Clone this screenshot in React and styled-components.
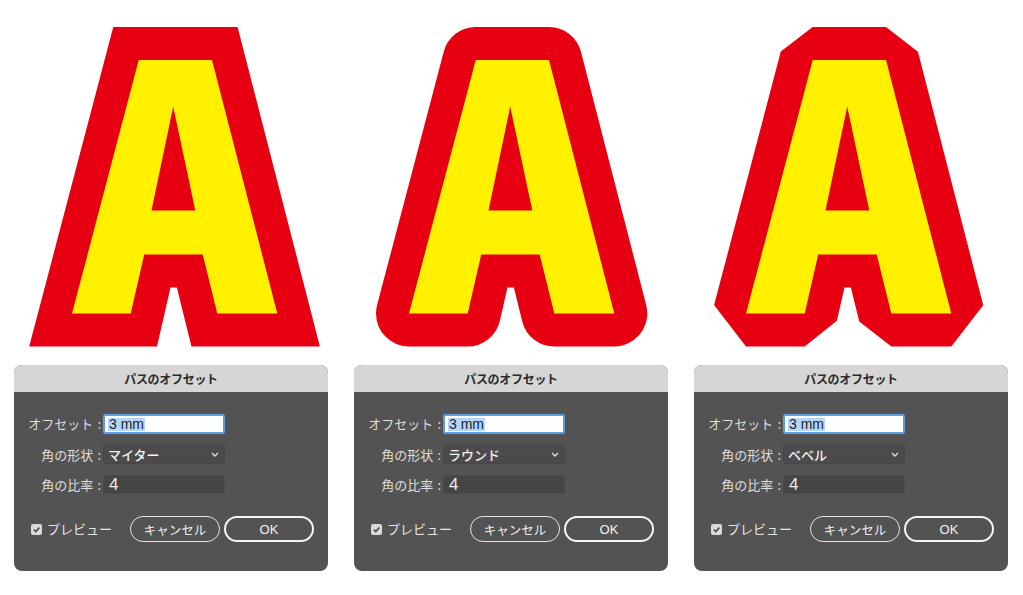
import React from 'react';
import styled, { createGlobalStyle } from 'styled-components';

const GlobalStyle = createGlobalStyle`
    body {
        margin: 0;
        background: #ffffff;
        font-family: "Noto Sans CJK JP", "Noto Sans", sans-serif;
    }
`;

const RED = '#e60012';
const YELLOW = '#fff100';

// the glyph "A" outline and its counter, drawn once and offset by a stroke
const A_PATH = 'M138.7 60 L212 60 L277.3 313.5 L217.3 313.5 L202.7 254.5 L144.2 254.5 L130.7 313.5 L72 313.5 Z';
const COUNTER_PATH = 'M173.2 106.5 L195.3 210.5 L151.5 210.5 Z';

const variants = [
    { join: 'miter', shape: 'マイター' },
    { join: 'round', shape: 'ラウンド' },
    { join: 'bevel', shape: 'ベベル' },
];

const Page = styled.div`
    width: 1023px;
    height: 595px;
    display: flex;
    flex-direction: column;
`;

const LetterRow = styled.div`
    display: flex;
    height: 350px;
`;

const LetterSvg = styled.svg`
    width: 337px;
    height: 350px;
    flex: none;
`;

const DialogRow = styled.div`
    display: flex;
    gap: 26px;
    padding-left: 14px;
    margin-top: 15px;
`;

const Dialog = styled.div`
    width: 314px;
    height: 206px;
    border-radius: 8px;
    overflow: hidden;
    background: #535353;
    display: flex;
    flex-direction: column;
`;

const TitleBar = styled.div`
    height: 27px;
    background: #d6d6d6;
    color: #2b2b2b;
    font-size: 12px;
    font-weight: 700;
    letter-spacing: -0.3px;
    line-height: 27px;
    text-align: center;
`;

const Fields = styled.div`
    display: grid;
    grid-template-columns: 87px 122px;
    grid-template-rows: 20px 19px 19px;
    column-gap: 2px;
    row-gap: 11px;
    padding-top: 22px;
`;

const Label = styled.div`
    color: #dedede;
    font-size: 13px;
    line-height: 20px;
    text-align: right;
    white-space: nowrap;
`;

const Colon = styled.span`
    margin-left: 4px;
`;

const TextInput = styled.div`
    box-sizing: border-box;
    background: #ffffff;
    border: 2px solid #5c9ee4;
    border-radius: 2px;
    padding-left: 3px;
    display: flex;
    align-items: center;
`;

const Selected = styled.span`
    background: #b5d6fb;
    color: #1d1d1d;
    font-family: "Liberation Sans", Arial, sans-serif;
    font-size: 14px;
    line-height: 13px;
    padding: 0 1px;
`;

const Select = styled.div`
    box-sizing: border-box;
    background: #4b4b4b;
    border: 1px solid #474747;
    border-radius: 2px;
    padding: 0 5px 0 4px;
    display: flex;
    align-items: center;
    justify-content: space-between;
    color: #f2f2f2;
    font-size: 13px;
    font-weight: 500;
    line-height: 17px;
`;

const RatioInput = styled.div`
    box-sizing: border-box;
    background: #454545;
    border: 1px solid #4a4a4a;
    border-radius: 2px;
    padding-left: 5px;
    color: #ececec;
    font-family: "Liberation Sans", Arial, sans-serif;
    font-size: 17px;
    line-height: 18px;
`;

const Footer = styled.div`
    display: flex;
    align-items: center;
    justify-content: space-between;
    margin-top: 22px;
    padding: 0 14px 0 17px;
    height: 26px;
`;

const Preview = styled.div`
    display: flex;
    align-items: center;
    gap: 5px;
    color: #e4e4e4;
    font-size: 13px;
    line-height: 16px;
`;

const CheckBox = styled.span`
    width: 11px;
    height: 11px;
    border-radius: 2px;
    background: #d9d9d9;
    display: flex;
    align-items: center;
    justify-content: center;
`;

const Buttons = styled.div`
    display: flex;
    gap: 4px;
`;

const Button = styled.div`
    box-sizing: border-box;
    width: 90px;
    height: 26px;
    border-radius: 13px;
    border: ${(p) => (p.$primary ? '2px solid #f4f4f4' : '1.5px solid #e2e2e2')};
    color: #f2f2f2;
    font-family: ${(p) => (p.$primary ? '"Liberation Sans", Arial, sans-serif' : '"Noto Sans CJK JP", sans-serif')};
    font-size: ${(p) => (p.$primary ? '13px' : '12.5px')};
    display: flex;
    align-items: center;
    justify-content: center;
`;

const Letter = ({ join }) => (
    <LetterSvg viewBox="0 0 337 350">
        <path
            d={A_PATH}
            fill={RED}
            stroke={RED}
            strokeWidth={66}
            strokeLinejoin={join}
            strokeMiterlimit={4}
        />
        <path d={`${A_PATH} ${COUNTER_PATH}`} fill={YELLOW} fillRule="evenodd" />
    </LetterSvg>
);

const OffsetDialog = ({ shape }) => (
    <Dialog>
        <TitleBar>パスのオフセット</TitleBar>
        <Fields>
            <Label>オフセット<Colon>:</Colon></Label>
            <TextInput>
                <Selected>3 mm</Selected>
            </TextInput>
            <Label>角の形状<Colon>:</Colon></Label>
            <Select>
                {shape}
                <svg width="8" height="5" viewBox="0 0 8 5">
                    <polyline points="1,1 4,4 7,1" fill="none" stroke="#e2e2e2" strokeWidth="1.4" />
                </svg>
            </Select>
            <Label>角の比率<Colon>:</Colon></Label>
            <RatioInput>4</RatioInput>
        </Fields>
        <Footer>
            <Preview>
                <CheckBox>
                    <svg width="9" height="9" viewBox="0 0 9 9">
                        <polyline points="1.8,4.6 3.8,6.6 7.4,2.4" fill="none" stroke="#4a4a4a" strokeWidth="1.6" />
                    </svg>
                </CheckBox>
                プレビュー
            </Preview>
            <Buttons>
                <Button>キャンセル</Button>
                <Button $primary>OK</Button>
            </Buttons>
        </Footer>
    </Dialog>
);

const App = () => (
    <Page>
        <GlobalStyle />
        <LetterRow>
            {variants.map((v) => (
                <Letter key={v.join} join={v.join} />
            ))}
        </LetterRow>
        <DialogRow>
            {variants.map((v) => (
                <OffsetDialog key={v.join} shape={v.shape} />
            ))}
        </DialogRow>
    </Page>
);

export default App;
